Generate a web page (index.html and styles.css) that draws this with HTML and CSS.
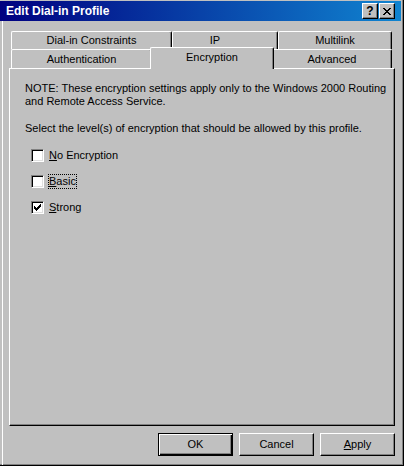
FILE: index.html
```html
<!DOCTYPE html>
<html>
<head>
<meta charset="utf-8">
<title>Edit Dial-in Profile</title>
<link rel="stylesheet" href="styles.css">
</head>
<body>
<div class="window">
  <div class="titlebar">
    <span class="title">Edit Dial-in Profile</span>
    <div class="caption-buttons">
      <span class="cbtn help">?</span>
      <span class="cbtn close"><svg width="8" height="7" viewBox="0 0 8 7" shape-rendering="crispEdges"><path fill="#000" d="M0 0h2v1h-2z M6 0h2v1h-2z M1 1h2v1h-2z M5 1h2v1h-2z M2 2h4v1h-4z M3 3h2v1h-2z M2 4h4v1h-4z M1 5h2v1h-2z M5 5h2v1h-2z M0 6h2v1h-2z M6 6h2v1h-2z"/></svg></span>
    </div>
  </div>
  <div class="client">
    <div class="tabs">
      <div class="tabrow back">
        <div class="tab w-dial">Dial-in Constraints</div>
        <div class="tab w-ip">IP</div>
        <div class="tab w-multi">Multilink</div>
      </div>
      <div class="tabrow front">
        <div class="tab w-auth">Authentication</div>
        <div class="tab selected w-enc">Encryption</div>
        <div class="tab w-adv">Advanced</div>
      </div>
    </div>
    <div class="panel">
      <p class="note">NOTE: These encryption settings apply only to the Windows 2000 Routing<br>and Remote Access Service.</p>
      <p class="select">Select the level(s) of encryption that should be allowed by this profile.</p>
      <div class="checks">
        <div class="check"><span class="box"></span><span class="label"><u>N</u>o Encryption</span></div>
        <div class="check"><span class="box"></span><span class="label focus"><u>B</u>asic</span></div>
        <div class="check"><span class="box checked"><svg width="7" height="7" viewBox="0 0 7 7" shape-rendering="crispEdges"><path fill="#000" d="M6 0h1v1h-1z M5 1h2v1h-2z M0 2h1v1h-1z M4 2h3v1h-3z M0 3h2v1h-2z M3 3h3v1h-3z M0 4h5v1h-5z M1 5h3v1h-3z M2 6h1v1h-1z"/></svg></span><span class="label"><u>S</u>trong</span></div>
      </div>
    </div>
    <div class="buttons">
      <span class="btn default">OK</span>
      <span class="btn">Cancel</span>
      <span class="btn"><u>A</u>pply</span>
    </div>
  </div>
</div>
</body>
</html>
```

FILE: styles.css
```css
html, body {
  margin: 0;
  padding: 0;
  background: #c0c0c0;
}

body {
  font-family: "Liberation Sans", Arial, sans-serif;
  font-size: 11px;
  color: #000;
}

.window {
  width: 404px;
  height: 466px;
  box-sizing: border-box;
  background: #c0c0c0;
  border-right: 1px solid #000;
  border-bottom: 1px solid #000;
  box-shadow: inset -1px -1px #808080;
  display: flex;
  flex-direction: column;
}

.titlebar {
  height: 20px;
  margin-top: 1px;
  margin-right: 2px;
  padding-left: 6px;
  padding-right: 6px;
  display: flex;
  align-items: center;
  background: linear-gradient(to right, #000080, #1084d0);
  color: #fff;
  font-weight: bold;
  font-size: 12px;
  line-height: 20px;
}

.caption-buttons {
  margin-left: auto;
  display: flex;
  gap: 1px;
}

.cbtn {
  width: 16px;
  height: 16px;
  box-sizing: border-box;
  background: #c0c0c0;
  border-top: 1px solid #fff;
  border-left: 1px solid #fff;
  border-right: 1px solid #000;
  border-bottom: 1px solid #000;
  box-shadow: inset -1px -1px #808080;
  display: flex;
  align-items: center;
  justify-content: center;
  color: #000;
  font-weight: bold;
  font-size: 12px;
  line-height: 14px;
}

.client {
  flex: 1;
  margin-left: 2px;
  border-left: 1px solid #fff;
  display: flex;
  flex-direction: column;
}

.tabs {
  margin-top: 10px;
  margin-left: 8px;
  width: 381px;
}

.tabrow {
  display: flex;
  align-items: flex-end;
}

.tabrow.back {
  height: 18px;
}

.tabrow.front {
  height: 19px;
}

.tab {
  box-sizing: border-box;
  border-top: 1px solid #fff;
  border-left: 1px solid #fff;
  border-right: 1px solid #000;
  box-shadow: inset -1px 0 #808080;
  border-radius: 2px 2px 0 0;
  background: #c0c0c0;
  text-align: center;
  line-height: 13px;
  white-space: nowrap;
}

.back .tab {
  height: 18px;
  padding-top: 2px;
}

.front .tab {
  height: 19px;
  padding-top: 3px;
}

.front .tab.selected {
  height: 22px;
  margin: -2px -2px -1px -2px;
  padding-top: 3px;
  position: relative;
  z-index: 2;
}

.w-dial { width: 161px; }
.w-ip { width: 106px; padding-right: 20px; }
.w-multi { width: 114px; }
.w-auth { width: 141px; }
.w-enc { width: 124px; }
.w-adv { width: 120px; }

.panel {
  box-sizing: border-box;
  width: 386px;
  height: 358px;
  margin-left: 6px;
  border-top: 1px solid #fff;
  border-left: 1px solid #fff;
  border-right: 1px solid #000;
  border-bottom: 1px solid #000;
  box-shadow: inset -1px -1px #808080;
  padding: 13px 0 0 15px;
  line-height: 13px;
}

.panel p {
  margin: 0;
  white-space: nowrap;
}

.note {
  margin-bottom: 14px !important;
}

.checks {
  margin-top: 14px;
  margin-left: 6px;
  display: flex;
  flex-direction: column;
  gap: 13px;
}

.check {
  display: flex;
  align-items: flex-start;
  height: 13px;
}

.box {
  width: 13px;
  height: 13px;
  box-sizing: border-box;
  background: #fff;
  border-top: 1px solid #808080;
  border-left: 1px solid #808080;
  border-right: 1px solid #fff;
  border-bottom: 1px solid #fff;
  box-shadow: inset 1px 1px #000, inset -1px -1px #dfdfdf;
  display: flex;
  align-items: center;
  justify-content: center;
  margin-right: 5px;
}

.label {
  line-height: 13px;
}

.focus {
  outline: 1px dotted #000;
  outline-offset: 0;
}

.buttons {
  margin-top: 7px;
  margin-right: 8px;
  display: flex;
  justify-content: flex-end;
  gap: 6px;
}

.btn {
  width: 75px;
  height: 23px;
  box-sizing: border-box;
  border-top: 1px solid #fff;
  border-left: 1px solid #fff;
  border-right: 1px solid #000;
  border-bottom: 1px solid #000;
  box-shadow: inset -1px -1px #808080;
  text-align: center;
  line-height: 21px;
}

.btn.default {
  border: 1px solid #000;
  box-shadow: inset 1px 1px #fff, inset -1px -1px #000, inset -2px -2px #808080;
}
```
